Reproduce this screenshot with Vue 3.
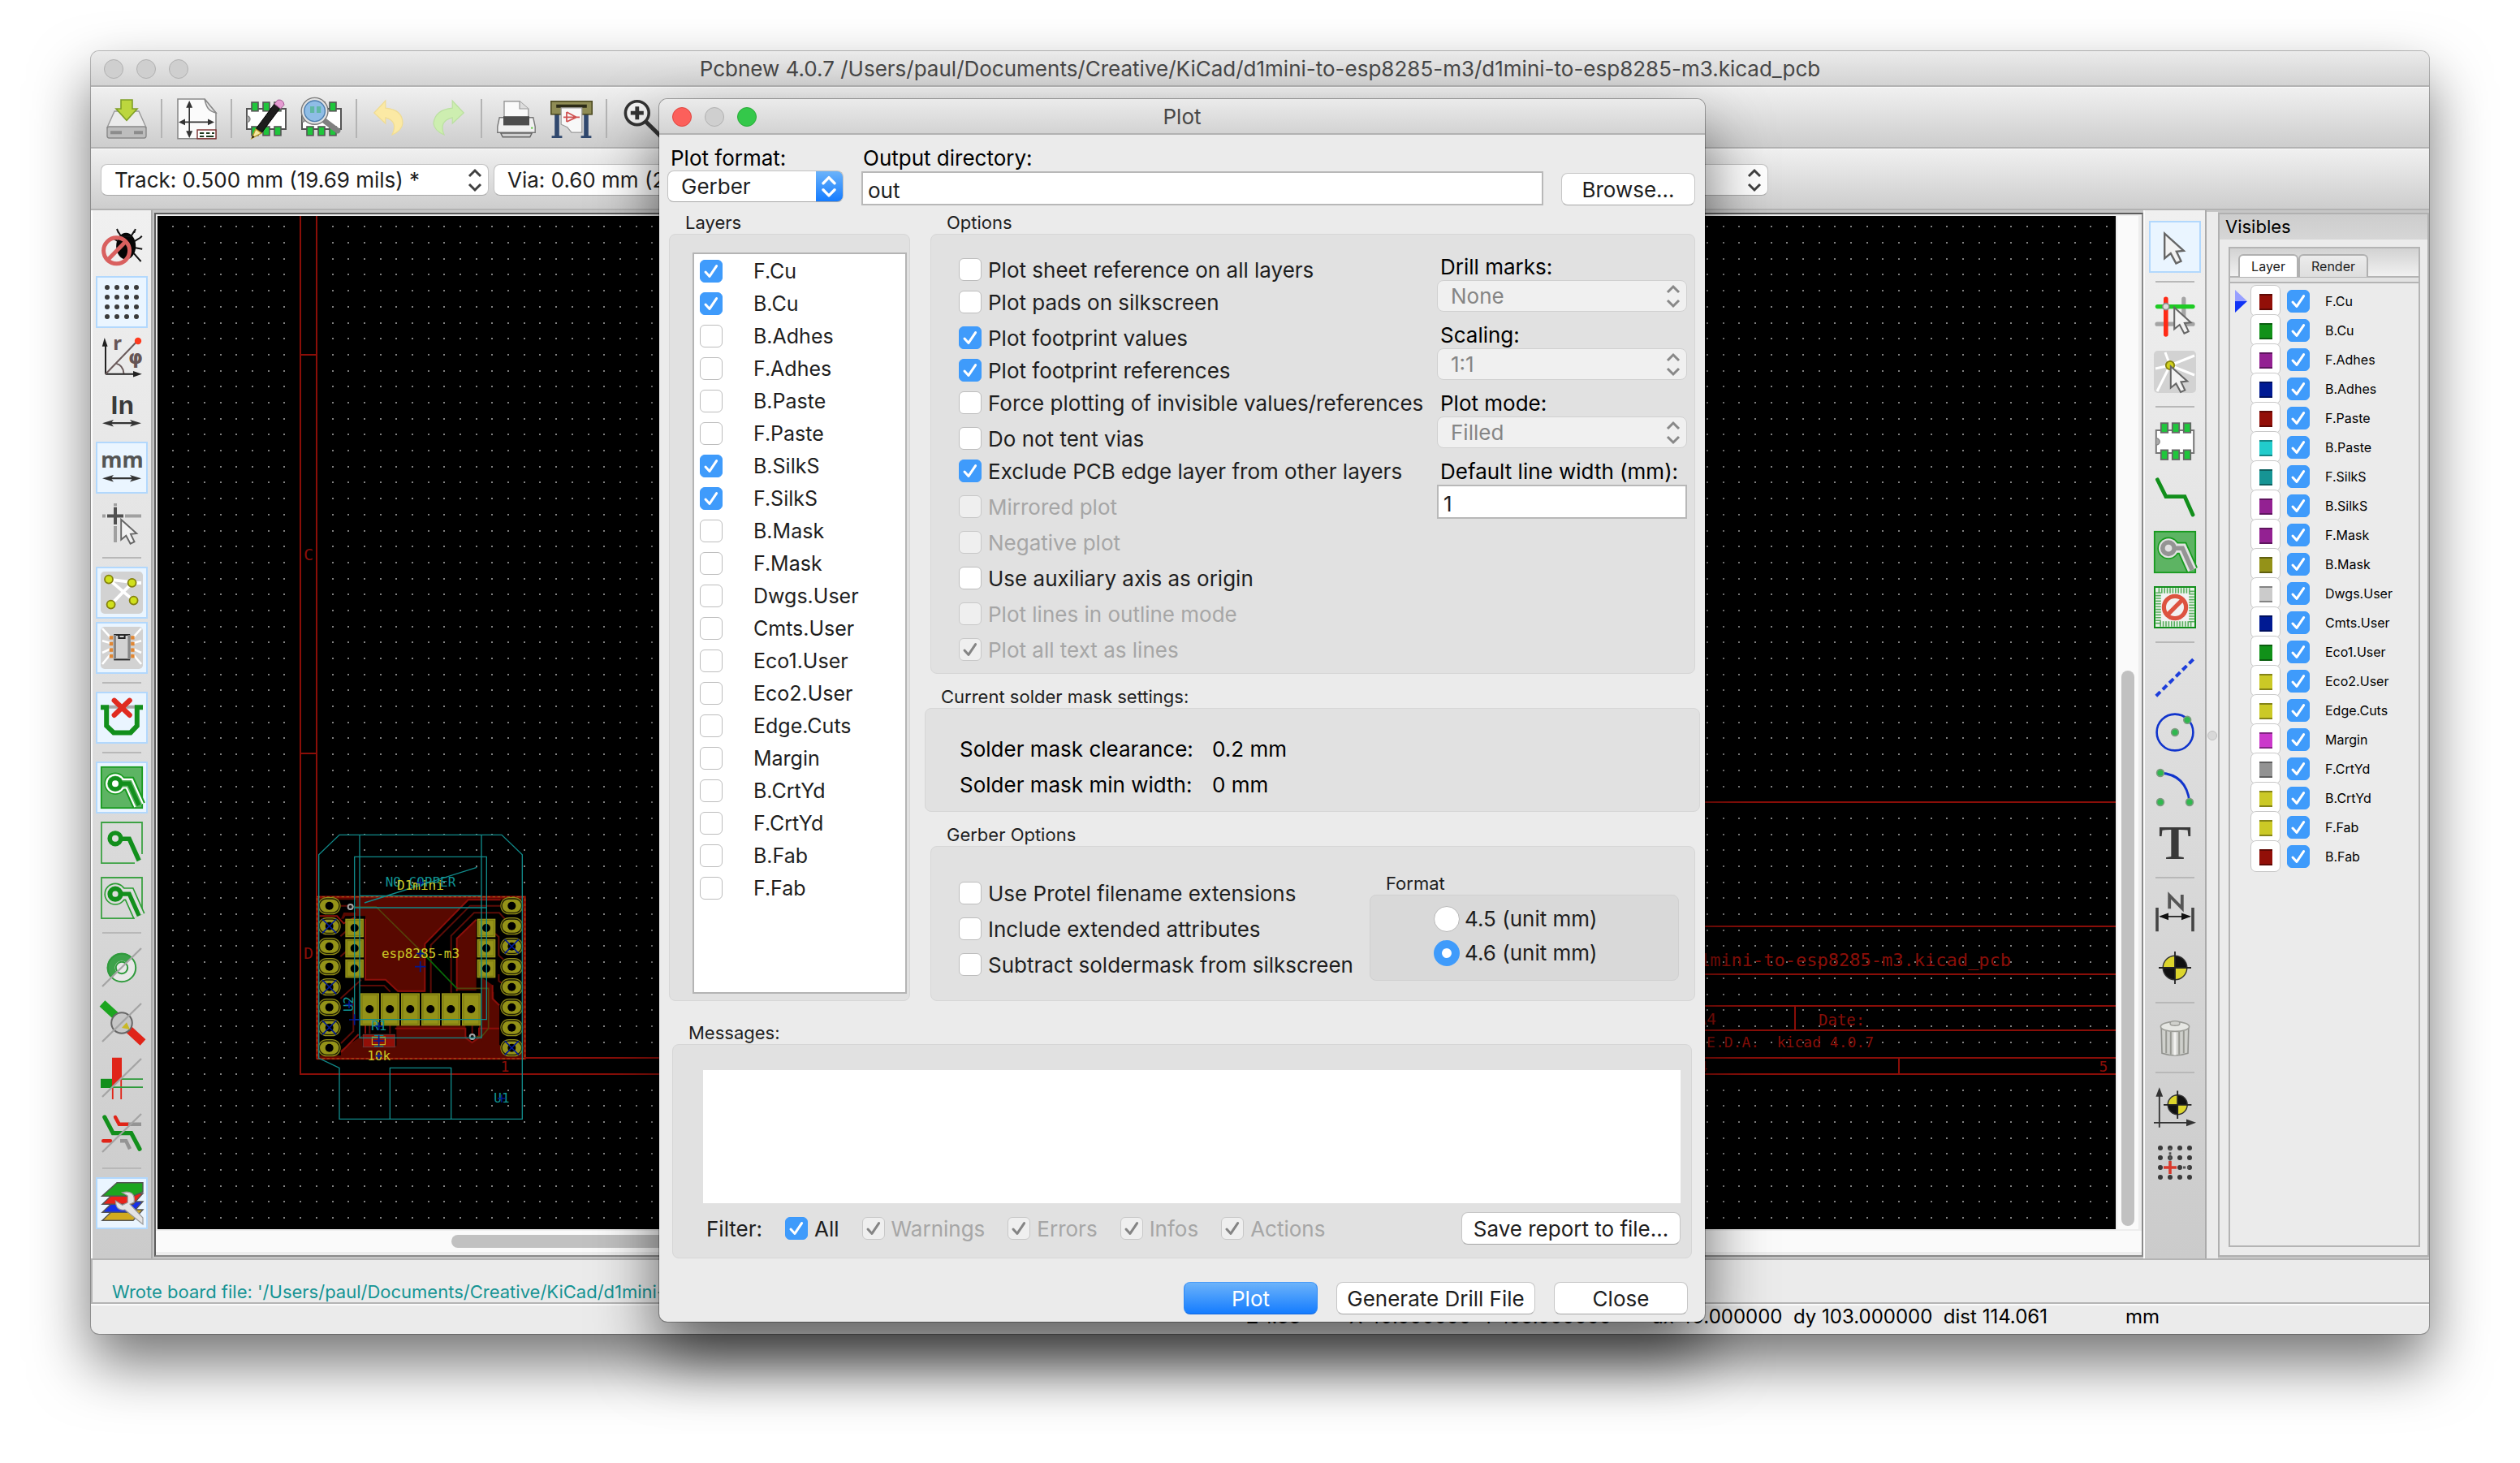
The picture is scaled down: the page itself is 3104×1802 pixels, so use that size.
<script setup>
import { ref } from 'vue'

const pointer = (x, y, s = 1) =>
  `<path transform="translate(${x} ${y}) scale(${s})" d="M0 0 L0 13 L3.2 10.4 L6 15.6 L8.6 14.4 L6.2 9.4 L10 9 Z" fill="#f2f2f2" stroke="#666" stroke-width="1"/>`

const target = (x, y, r) =>
  `<g transform="translate(${x} ${y})"><circle r="${r}" fill="#111"/><path d="M0 0V${-r}A${r} ${r} 0 0 0 ${-r} 0ZM0 0V${r}A${r} ${r} 0 0 0 ${r} 0Z" fill="#dcd52c"/><circle r="${r}" fill="none" stroke="#333" stroke-width=".7"/><path d="M${-r - 2.6} 0H${r + 2.6}M0 ${-r - 2.6}V${r + 2.6}" stroke="#222" stroke-width=".9"/></g>`

const dots = (skip = []) => {
  let out = ''
  for (const y of [4, 10, 16, 22]) {
    for (const x of [4, 10, 16, 22]) {
      if (!skip.includes(`${x},${y}`)) out += `<circle cx="${x}" cy="${y}" r="1.5" fill="#3a3a3a"/>`
    }
  }
  return out
}

const trackPath = 'M12.5 10.6H17.6L23.6 24'
const board =
  '<path d="M1 7H25V19.5H1Z" fill="#fff" stroke="#555" stroke-width="1"/><path d="M1.2 11.5a1.8 1.8 0 0 1 0 3.6" fill="#aaa" stroke="#888" stroke-width=".7"/>' +
  [4, 11, 18].map(x => `<rect x="${x}" y="3" width="4" height="5.4" fill="#1fc63c" stroke="#555" stroke-width=".8"/><rect x="${x}" y="18" width="4" height="5.4" fill="#1fc63c" stroke="#555" stroke-width=".8"/>`).join('')
const arrows = y =>
  `<path d="M4 ${y}H22" stroke="#333" stroke-width="1.1"/><path d="M1 ${y}L8 ${y - 2.1}L6.4 ${y}L8 ${y + 2.1}ZM25 ${y}L18 ${y - 2.1}L19.6 ${y}L18 ${y + 2.1}Z" fill="#333"/>`
const slash = '<path d="M1 24.5L25 1" stroke="#a4a4a4" stroke-width="1.1"/>'
const grayTile = '<rect width="26" height="26" rx="2.4" fill="#d2d2d2"/>'

const icons = {
  save: '<path d="M5.5 8.5H20.5L25 18.5H1Z" fill="#ebebeb" stroke="#999" stroke-width=".7"/><rect x="1" y="18" width="24" height="7" rx="1.2" fill="#bdbdbd" stroke="#888" stroke-width=".7"/><path d="M3 21.6H10M17.5 21.6H23" stroke="#8c8c8c" stroke-width="2"/><path d="M9.5 1.5H16.5V7H19.5L13 14.2L6.5 7H9.5Z" fill="#bcd63e" stroke="#7f9f26" stroke-width=".8"/>',
  page: '<path d="M1.5 1H18L25 9.5V25.4H1.5Z" fill="#fbfbfb" stroke="#8a8a8a" stroke-width=".8"/><path d="M18 1C19 6 20.5 8.5 25 9.5Z" fill="#e6e6e6" stroke="#8a8a8a" stroke-width=".7"/><path d="M8.6 4V23M4 15.2H22" stroke="#333" stroke-width=".8"/><path d="M8.6 2L10.6 6.4H6.6ZM8.6 25L10.6 20.6H6.6ZM2 15.2L6 13.3V17.1ZM24 15.2L20 13.3V17.1Z" fill="#333"/><rect x="13.5" y="20" width="11.5" height="5.4" fill="#fff" stroke="#7a3030" stroke-width=".7"/><path d="M15 22H17.6M19 22H21.2M22.5 22H24M15 24H17.6M19 24H23.6" stroke="#1d381d" stroke-width="1.1"/>',
  boardEdit: board + '<path d="M6.5 19.5L18 4L21.5 6.6L10 22Z" fill="#1d1d1d" stroke="#000" stroke-width=".5"/><path d="M18 4L20 1.6Q23.5 1 24 4.6L21.8 7Z" fill="#e59bd2" stroke="#a35a94" stroke-width=".5"/><path d="M6.5 19.5L4 25.2L10 22Z" fill="#f4e8a0" stroke="#bb9a28" stroke-width=".7"/><path d="M4.6 23.4L4 25.2L5.8 24.4Z" fill="#111"/>',
  boardFind: board + '<path d="M15 14.5L23 20.5" stroke="#808080" stroke-width="3.4" stroke-linecap="round"/><circle cx="8.8" cy="8.4" r="7.4" fill="#8fbde6" stroke="#e2e2e2" stroke-width="1.8"/><circle cx="8.8" cy="8.4" r="8.2" fill="none" stroke="#7a7a7a" stroke-width=".7"/><circle cx="8.8" cy="8.4" r="6.4" fill="none" stroke="#4f7faf" stroke-width=".7"/><path d="M6 5.5h2.6v4H6zM10 5.5h2.6v4H10z" fill="#5fb8a4"/>',
  undo: '<path d="M2.4 9.5L9.4 2V6.6Q20 7.5 20 16Q19.5 20.5 13.5 23Q17.5 14.5 9.4 12.4V16Z" fill="#fbe9a4" stroke="#f0dc92" stroke-width=".6"/>',
  redo: '<path d="M23.6 9.5L16.6 2V6.6Q6 7.5 5 16Q5.5 20.5 11.5 23Q8 14.5 16.6 12.4V16Z" fill="#cdeeb0" stroke="#bbe0a0" stroke-width=".6"/>',
  print: '<path d="M5.5 13V2.4H15L20.4 7V13Z" fill="#fafafa" stroke="#999" stroke-width=".7"/><path d="M15 2.4V7H20.4" fill="#ddd" stroke="#999" stroke-width=".6"/><path d="M2.6 12.4H23.4L24.6 18V21.6H1.4V18Z" fill="#f0f0f0" stroke="#777" stroke-width=".7"/><rect x="5" y="11.6" width="16" height="5.6" fill="#4d4d4d"/><path d="M3.4 22H22.6L21.4 24.4H4.6Z" fill="#cfcfcf" stroke="#666" stroke-width=".7"/><circle cx="22.6" cy="18.8" r=".6" fill="#59c83a"/>',
  plot: '<path d="M2.6 9H5.4V23.6H7.2V25H.8V23.6H2.6ZM20.6 9H23.4V23.6H25.2V25H18.8V23.6H20.6Z" fill="#30486e"/><rect x=".4" y="2.4" width="25.2" height="8" fill="#8f8c55" stroke="#4e4b22" stroke-width=".8"/><path d="M3.6 4.4H22.4V6.4H3.6Z" fill="#2b2a16"/><path d="M6.6 6.4H19.4V21.6H13L10.4 18.4L6.6 16.6Z" fill="#f8f8f8" stroke="#999" stroke-width=".6"/><path d="M10 9V15M10 9L16 12.2L10 15M8 12.2H18" fill="none" stroke="#d05252" stroke-width=".9"/>',
  zoomIn: '<circle cx="10.4" cy="9.6" r="7.2" fill="#f4f4f4" stroke="#333" stroke-width="1.8"/><path d="M6.4 9.6H14.4M10.4 5.6V13.6" stroke="#333" stroke-width="2.4"/><path d="M15.8 15L25 24" stroke="#333" stroke-width="2.6"/>',
  bug: '<ellipse cx="15.6" cy="12.6" rx="6" ry="8.2" fill="#050505"/><path d="M10.6 3.4L12.6 6.6L18.6 6.6L20.8 3.2M10 2L11 4.4M21.4 2L20.6 4.4M20.8 9.6L24.4 7.4L25.4 6.4M21.4 13.6L25.6 14.4M20.4 17L23.4 20.4L24.8 22M8 8L10.4 9.4" fill="none" stroke="#111" stroke-width="1"/><circle cx="9.8" cy="15.4" r="8" fill="none" stroke="#d9605f" stroke-width="2.5"/><path d="M4.4 21L15.4 9.8" stroke="#d9605f" stroke-width="2.5"/>',
  grid: dots(),
  polar: '<path d="M3 23.4V4M3 23.4H23" stroke="#222" stroke-width="1"/><path d="M2.4 1L4.3 6.4H.9ZM25.4 23.4L20 21.5V25.3Z" fill="#222"/><path d="M3 23.4L22.6 3M9.4 16.8Q14 18 14.2 23" fill="none" stroke="#6a5a5a" stroke-width="1"/><circle cx="23" cy="3" r="2.1" fill="#ff3a1e"/><text x="7.6" y="8.6" font-family="Noto Sans" font-weight="700" font-size="12" fill="#655">r</text><text x="17" y="17" font-family="DejaVu Sans" font-weight="700" font-size="11.5" fill="#655">φ</text>',
  inch: '<text x="13.4" y="13.8" text-anchor="middle" font-family="Liberation Sans" font-weight="700" font-size="16" fill="#3a3a3a">In</text>' + arrows(19.6),
  mm: '<text x="13.2" y="12.8" text-anchor="middle" font-family="Noto Sans" font-weight="700" font-size="13.4" fill="#555">mm</text>' + arrows(19.6),
  crosshair: '<path d="M1 8.8H3M15 8.8H25M9 1V2.6M9 15V25" stroke="#a0a0a0" stroke-width="2"/><path d="M4 8.8H14M9 3.4V14" stroke="#505050" stroke-width="2"/>' + pointer(12.6, 11, 0.95),
  ratsnest: grayTile + '<path d="M5 4.8L19.3 6.6M5 4.8L20.3 17.8M19.3 7L6.3 20.3M19 7H25" stroke="#fff" stroke-width="1.9"/>' + [[5, 4.8], [19.3, 6.9], [6.3, 20.3], [20.3, 17.8]].map(([x, y]) => `<circle cx="${x}" cy="${y}" r="2.5" fill="#d0e01c" stroke="#83800e" stroke-width=".9"/>`).join(''),
  chip: grayTile + '<path d="M6 6.6L1 1M6 10L1 8.6M6 13.6L1 16M6 17L1 23M20 6.6L25 1M20 10L25 8.6M20 13.6L25 16M20 17L25 23" stroke="#fff" stroke-width="1.3"/><rect x="8.6" y="5" width="9" height="15.2" fill="#d2d2d2" stroke="#2b2b2b" stroke-width="1"/><path d="M8.7 5V20M17.5 5V20" stroke="#888" stroke-width="1.6"/><path d="M11.2 5.2V7H14.8V5.2" fill="none" stroke="#222" stroke-width="1"/>' + [6.6, 10.4, 14.2, 18].map(y => `<rect x="5.4" y="${y - 1}" width="2.2" height="2.2" fill="#e08734"/><rect x="18.6" y="${y - 1}" width="2.2" height="2.2" fill="#e08734"/>`).join(''),
  drc: '<path d="M4 6.4H22" stroke="#aaa" stroke-width="2"/><path d="M0 6.6H3.6V18L8 22.2H18.4L22.4 18V6.6H26" fill="none" stroke="#128f1c" stroke-width="3"/><path d="M8.4 2.4L17.8 11.4M17.8 2.4L8.4 11.4" stroke="#e02b20" stroke-width="3.2" stroke-linecap="round"/>',
  zoneFill: `<rect x=".4" y=".4" width="25.2" height="25.2" fill="#5db463" stroke="#179a1e" stroke-width=".9"/><circle cx="9" cy="10.6" r="6.8" fill="#179a1e"/><path d="${trackPath}" fill="none" stroke="#179a1e" stroke-width="8.4"/><circle cx="9" cy="10.6" r="6" fill="#fff"/><path d="${trackPath}" fill="none" stroke="#fff" stroke-width="6.4"/><circle cx="9" cy="10.6" r="4.9" fill="#5db463"/><path d="${trackPath}" fill="none" stroke="#5db463" stroke-width="4.2"/><circle cx="9" cy="10.6" r="3.3" fill="#fff" stroke="#128f1c" stroke-width="2.6"/><path d="${trackPath}" fill="none" stroke="#128f1c" stroke-width="2.6"/>`,
  zoneNone: `<path d="M21 25.6H.5V.5H25.5V20" fill="none" stroke="#3da244" stroke-width=".9"/><circle cx="9" cy="10.4" r="3.4" fill="#ddd" stroke="#128f1c" stroke-width="2.8"/><path d="${trackPath}" fill="none" stroke="#128f1c" stroke-width="2.8"/>`,
  zoneOutline: `<path d="M21 25.6H.5V.5H25.5V20" fill="none" stroke="#3da244" stroke-width=".9"/><circle cx="9" cy="10.6" r="6.8" fill="#2a9c32"/><path d="${trackPath}" fill="none" stroke="#2a9c32" stroke-width="8"/><circle cx="9" cy="10.6" r="6" fill="#ddd"/><path d="${trackPath}" fill="none" stroke="#ddd" stroke-width="6.4"/><circle cx="9" cy="10.6" r="3.3" fill="#ddd" stroke="#128f1c" stroke-width="3"/><path d="${trackPath}" fill="none" stroke="#128f1c" stroke-width="2.6"/>`,
  via: '<circle cx="13" cy="13" r="6.4" fill="none" stroke="#e8e8e8" stroke-width="5"/><path d="M6.4 19.4A9 9 0 0 1 19.4 6.6L16 10A4 4 0 0 0 10 16Z" fill="#3da24a"/><circle cx="13" cy="13" r="8.6" fill="none" stroke="#2f9a3c" stroke-width="1"/><circle cx="13" cy="13" r="3.6" fill="#e8e8e8" stroke="#2f9a3c" stroke-width="1"/>' + slash,
  contrast: '<path d="M1 1L13 12" stroke="#1ba51f" stroke-width="5"/><path d="M13 13L26 25" stroke="#e02418" stroke-width="5"/><circle cx="13" cy="13" r="6.4" fill="#c6c6c6" stroke="#666" stroke-width="1"/><path d="M13 16L16 12.6L18 17Z" fill="#c9b824"/>' + slash,
  trackMode: '<rect y="13.4" width="7" height="5.6" fill="#128f1c"/><path d="M7 .4H13V13.5L7 18Z" fill="#e02418"/><path d="M7.4 17V26M12.6 13V26" stroke="#e02418" stroke-width=".9"/><path d="M13 13.6H26M7 18.6H26" stroke="#2f9a3c" stroke-width=".9"/>' + slash,
  trackSketch: '<path d="M9 3L11.4 7.4H17" fill="none" stroke="#e02418" stroke-width="2.2" stroke-linecap="round"/><path d="M17 7.4H25M12 17.6H15.6L18 22.6" fill="none" stroke="#949494" stroke-width="2.2"/><path d="M2.4 3L7.6 12.8H18.8L24 22.6" fill="none" stroke="#128f1c" stroke-width="2.6" stroke-linecap="round"/><path d="M1.6 17.6H6" stroke="#e02418" stroke-width="2.2" stroke-linecap="round"/>' + slash,
  layers: '<path d="M8 17L1 23.6H20L26 17Z" fill="#d2ab1f" stroke="#555" stroke-width=".7"/><path d="M8 12L1 18.6H20L26 12Z" fill="#1630e8" stroke="#555" stroke-width=".7"/><path d="M8 7L1 13.6H20L26 7Z" fill="#e8231a" stroke="#555" stroke-width=".7"/><path d="M10 .4L.8 8.6H20L26 6V.4Z" fill="#1ba51f" stroke="#555" stroke-width=".7"/><path d="M18 13.6L26 22V26L14.8 17Q9.4 18 9.2 11.6L13.4 14.2L16.6 12.6V8.4L13.2 6.4Q21.6 4.6 20.6 12.4Z" fill="#e4e4e4" stroke="#9a9a9a" stroke-width=".6"/>',
  arrow: pointer(6.6, 4.8, 1.18),
  highlight: '<path d="M18.4 2V16M2 17.6H24" stroke="#a4a4a4" stroke-width="2.6" stroke-linecap="round"/><path d="M7.4 2.2V24" stroke="#ff2a16" stroke-width="2.8" stroke-linecap="round"/><path d="M2.2 6.8H24" stroke="#1ecb24" stroke-width="2.6" stroke-linecap="round"/><circle cx="7.4" cy="6.8" r="2" fill="#ddd" stroke="#888" stroke-width=".8"/>' + pointer(12.6, 7.4, 1.02),
  localRats: grayTile + '<path d="M10 9L7 1M10 9L25 3M10 9L1 11M10 9L25 15M10 9L2 25" stroke="#fff" stroke-width="1.5"/><circle cx="10" cy="9" r="2.6" fill="#d0d01c" stroke="#83800e" stroke-width=".9"/>' + pointer(10.4, 9.6, 1.02),
  footprint: '<path d="M1.4 6H24.6V20H1.4Z" fill="#fff" stroke="#777" stroke-width="1"/><path d="M1.6 11a2 2 0 0 1 0 4" fill="#aaa" stroke="#888" stroke-width=".7"/>' + [4.4, 11.4, 18.4].map(x => `<rect x="${x}" y="1.6" width="4.2" height="5.8" fill="#1fc63c" stroke="#666" stroke-width=".9"/><rect x="${x}" y="18.2" width="4.2" height="5.8" fill="#1fc63c" stroke="#666" stroke-width=".9"/>`).join(''),
  track: '<path d="M2.2 2.4L7.4 12.8H19L24 24" fill="none" stroke="#128f1c" stroke-width="2.4" stroke-linecap="round"/>',
  zone: `<rect x=".4" y=".4" width="25.2" height="25.2" fill="#5db463" stroke="#179a1e" stroke-width=".9"/><circle cx="9" cy="10.6" r="6.8" fill="#179a1e"/><path d="${trackPath}" fill="none" stroke="#179a1e" stroke-width="7.4"/><circle cx="9" cy="10.6" r="6" fill="#e2e2e2"/><path d="${trackPath}" fill="none" stroke="#e2e2e2" stroke-width="5.6"/><circle cx="9" cy="10.6" r="3.6" fill="#e2e2e2" stroke="#949494" stroke-width="2.8"/><path d="${trackPath}" fill="none" stroke="#949494" stroke-width="2.8"/>`,
  keepout: '<rect x=".5" y=".5" width="25" height="25" fill="#e8f2e8" stroke="#128f1c" stroke-width="1"/><rect x="2.8" y="2.8" width="20.4" height="20.4" fill="none" stroke="#59ad5f" stroke-width="3.4" stroke-dasharray=".8 .9"/><rect x="4.4" y="4.4" width="17.2" height="17.2" fill="#f2f2f2"/><circle cx="13" cy="13" r="6.8" fill="none" stroke="#dd5340" stroke-width="2.6"/><path d="M8.6 17.4L17.4 8.6" stroke="#dd5340" stroke-width="2.6"/>',
  line: '<path d="M1.4 24.6L25 1.4" stroke="#1c3ddb" stroke-width="2" stroke-dasharray="3.6 2.1"/>',
  circle: '<circle cx="13" cy="13" r="11.2" fill="none" stroke="#1034cc" stroke-width="1.3"/><circle cx="13" cy="13" r="2.2" fill="#2fb84e" stroke="#7d9a80" stroke-width=".8"/><circle cx="20.6" cy="5.4" r="2.2" fill="#2fb84e" stroke="#7d9a80" stroke-width=".8"/>',
  arc: '<path d="M4 4Q20 5 22 22" fill="none" stroke="#1034cc" stroke-width="1.4"/>' + [[4, 4], [4, 22], [22, 22]].map(([x, y]) => `<circle cx="${x}" cy="${y}" r="2.2" fill="#2fb84e" stroke="#7d9a80" stroke-width=".8"/>`).join(''),
  text: '<text x="13" y="23" text-anchor="middle" font-family="Liberation Serif" font-weight="700" font-size="30" fill="#3a3a3a">T</text>',
  dimension: '<path d="M2 10V24.6M24 10V24.6" stroke="#444" stroke-width="1.8"/><path d="M4 15.4H22" stroke="#222" stroke-width=".9"/><path d="M3 15.4L9 13.2V17.6ZM23 15.4L17 13.2V17.6Z" fill="#111"/><path d="M9.6 10.6V2.4L17.4 10.4V2" fill="none" stroke="#555" stroke-width="1.9"/>',
  target: target(13, 13, 7.4),
  trash: '<path d="M4.6 7H21.4L21 22.6Q13 25.4 5 22.6Z" fill="#cfd0cc" stroke="#8f908c" stroke-width=".8"/><path d="M7.6 9V22.6M10.4 9.4V23.4M15.6 9.4V23.4M18.4 9V22.6" stroke="#989993" stroke-width="1"/><path d="M13 9.4V23.8" stroke="#f2f2f0" stroke-width="1.6"/><ellipse cx="13" cy="6.2" rx="8.8" ry="3" fill="#e6e7e3" stroke="#9b9c97" stroke-width=".8"/><ellipse cx="13" cy="4.2" rx="3" ry="1.4" fill="#d0d1cc" stroke="#9b9c97" stroke-width=".7"/>',
  origin: '<path d="M3.4 25.4V4M0 22.4H22" stroke="#333" stroke-width=".9"/><path d="M3.4 .6L5.6 6.4H1.2ZM26 22.4L20 20.2V24.6Z" fill="#333"/>' + target(14.6, 11.4, 6),
  gridOrigin: dots(['10,16']) + '<path d="M10 4V12M18 16H22" stroke="#555" stroke-width="1.4" stroke-dasharray="1.6 1"/><path d="M6 16H14M10 12V20" stroke="#d8392c" stroke-width="1.8"/>',
}

const topTools = ['save', '|', 'page', '|', 'boardEdit', 'boardFind', '|', 'undo', 'redo', '|', 'print', 'plot', '|', 'zoomIn']
const leftTools = ['bug', '*grid', 'polar', 'inch', '*mm', 'crosshair', '|', '*ratsnest', '*chip', '|', '*drc', '|', '*zoneFill', 'zoneNone', 'zoneOutline', '|', 'via', 'contrast', 'trackMode', 'trackSketch', '|', '*layers']
const rightTools = ['*arrow', '|', 'highlight', 'localRats', '|', 'footprint', 'track', 'zone', 'keepout', '|', 'line', 'circle', 'arc', 'text', '|', 'dimension', 'target', '|', 'trash', '|', 'origin', 'gridOrigin']
const parse = list => list.map(t => ({ sep: t === '|', on: t[0] === '*', name: t.replace('*', '') }))
const columns = { left: parse(leftTools), right: parse(rightTools) }

const visibles = ref([
  ['F.Cu', '#920f08'], ['B.Cu', '#119119'], ['F.Adhes', '#932192'], ['B.Adhes', '#001a93'],
  ['F.Paste', '#920f08'], ['B.Paste', '#21cccc'], ['F.SilkS', '#169494'], ['B.SilkS', '#932192'],
  ['F.Mask', '#932192'], ['B.Mask', '#949218'], ['Dwgs.User', '#cbcbcb'], ['Cmts.User', '#001a93'],
  ['Eco1.User', '#119119'], ['Eco2.User', '#cbc926'], ['Edge.Cuts', '#cbc926'], ['Margin', '#cb38cb'],
  ['F.CrtYd', '#929292'], ['B.CrtYd', '#cbc926'], ['F.Fab', '#cbc926'], ['B.Fab', '#920f08'],
].map(([name, color]) => ({ name, color, on: true })))

const plotLayers = ref([
  'F.Cu', 'B.Cu', 'B.Adhes', 'F.Adhes', 'B.Paste', 'F.Paste', 'B.SilkS', 'F.SilkS', 'B.Mask', 'F.Mask',
  'Dwgs.User', 'Cmts.User', 'Eco1.User', 'Eco2.User', 'Edge.Cuts', 'Margin', 'B.CrtYd', 'F.CrtYd', 'B.Fab', 'F.Fab',
].map(name => ({ name, on: ['F.Cu', 'B.Cu', 'B.SilkS', 'F.SilkS'].includes(name) })))

const options = ref([
  { label: 'Plot sheet reference on all layers', on: false },
  { label: 'Plot pads on silkscreen', on: false, tall: true },
  { label: 'Plot footprint values', on: true },
  { label: 'Plot footprint references', on: true },
  { label: 'Force plotting of invisible values/references', on: false, tall: true },
  { label: 'Do not tent vias', on: false },
  { label: 'Exclude PCB edge layer from other layers', on: true, tall: true },
  { label: 'Mirrored plot', on: false, off: true, tall: true },
  { label: 'Negative plot', on: false, off: true, tall: true },
  { label: 'Use auxiliary axis as origin', on: false, tall: true },
  { label: 'Plot lines in outline mode', on: false, off: true, tall: true },
  { label: 'Plot all text as lines', on: true, off: true, tall: true },
])

const gerberOptions = ref([
  { label: 'Use Protel filename extensions', on: false },
  { label: 'Include extended attributes', on: false },
  { label: 'Subtract soldermask from silkscreen', on: false },
])

const filters = ref([
  { label: 'All', on: true },
  { label: 'Warnings', on: true, off: true },
  { label: 'Errors', on: true, off: true },
  { label: 'Infos', on: true, off: true },
  { label: 'Actions', on: true, off: true },
])

const outDir = ref('out')
const lineWidth = ref('1')
const gerberFormat = ref('4.6')

// Work-grid dots, snapped to whole units so that each one stays crisp
const pitch = 19.69
let gridPath = ''
for (let i = 0; i < 123; i++) {
  for (let j = 0; j < 63; j++) {
    gridPath += `M${Math.round(211.6 + i * pitch)} ${Math.round(278.4 + j * pitch)}h2v2h-2z`
  }
}

const ovalPads = []
const leftNc = [1, 4, 6]
const rightNc = [2, 7]
for (let i = 0; i < 8; i++) {
  ovalPads.push({ x: 137, y: 347 + i * 75, nc: leftNc.includes(i) })
  ovalPads.push({ x: 811, y: 347 + i * 75, nc: rightNc.includes(i) })
}
const squarePads = [429, 504, 579].flatMap(y => [{ x: 230, y }, { x: 717, y }])
const bottomPads = [286, 361, 436, 511, 586, 661]
const anchors = [[473, 262, 14], [473, 524, 14], [473, 572, 20], [210, 712, 14], [230, 768, 20], [320, 792, 14], [320, 846, 20], [320, 902, 12], [773, 1059, 14]]
</script>

<template>
  <div class="desktop">
    <main class="window">
      <header class="titlebar">
        <div class="lights"><i></i><i></i><i></i></div>
        <h1>Pcbnew 4.0.7 /Users/paul/Documents/Creative/KiCad/d1mini-to-esp8285-m3/d1mini-to-esp8285-m3.kicad_pcb</h1>
      </header>

      <nav class="toolbar" aria-label="Main toolbar">
        <template v-for="(t, i) in topTools" :key="i">
          <span v-if="t === '|'" class="vsep"></span>
          <button v-else class="tool-h" :aria-label="t"><svg class="icon" viewBox="0 0 26 26" v-html="icons[t]"></svg></button>
        </template>
      </nav>

      <div class="toolbar selectors">
        <select class="select track" aria-label="Track width"><option>Track: 0.500 mm (19.69 mils) *</option></select>
        <select class="select" aria-label="Via size"><option>Via: 0.60 mm (23.6 mils)/ 0.40 mm (15.7 mils) *</option></select>
        <select class="select" aria-label="Grid"><option>Grid: 2.5400 mm (100.00 mils)</option></select>
        <select class="select" aria-label="Zoom"><option>Zoom 1.33</option></select>
      </div>

      <div class="workspace">
        <aside class="tools left">
          <template v-for="(t, i) in columns.left" :key="i">
            <span v-if="t.sep" class="hsep"></span>
            <button v-else class="tool" :class="{ on: t.on }" :aria-label="t.name"><svg class="icon" viewBox="0 0 26 26" v-html="icons[t.name]"></svg></button>
          </template>
        </aside>

        <section class="canvas-pane">
          <div class="canvas-row">
            <svg class="canvas" viewBox="194 266 2412 1248">
              <rect x="194" y="266" width="2412" height="1248" fill="#000" />
              <path :d="gridPath" fill="#808080" />

              <g class="sheet">
                <path d="M370 266V1323H2606M390 266V1303H2606" />
                <path d="M370 437H390M370 928H390M870 1303V1323M2339 1303V1323" />
                <path d="M1900 988H2606M1900 1141H2606M1900 1200H2606M1900 1239H2606M1900 1269H2606M2211 1239V1269" />
              </g>
              <g class="sheet-text">
                <text x="380" y="690" text-anchor="middle" font-size="20">C</text>
                <text x="380" y="1181" text-anchor="middle" font-size="20">D</text>
                <text x="622" y="1320" text-anchor="middle" font-size="18">1</text>
                <text x="2098" y="1320" text-anchor="middle" font-size="18">4</text>
                <text x="2591" y="1320" text-anchor="middle" font-size="18">5</text>
                <text x="2477" y="1190" text-anchor="end" font-size="22">File: d1mini-to-esp8285-m3.kicad_pcb</text>
                <text x="2114" y="1262" text-anchor="end" font-size="20">Size: A4</text>
                <text x="2240" y="1263" font-size="19">Date:</text>
                <text x="2308" y="1290" text-anchor="end" font-size="18">KiCad E.D.A.&nbsp;&nbsp;kicad 4.0.7</text>
              </g>

              <g transform="translate(360 1000) scale(.33333)">
                <rect x="91" y="313" width="770" height="600" fill="#580800" />
                <path d="M100 325H235V372H190L180 395H100ZM100 395H190L196 385H270V620H345L392 665H700V790H640V825L664 850L690 825V790H385V865H260V825L180 880V900H100ZM490 490L650 325H850V880H790L765 860V740L745 690V640L700 610V665H608V468L685 398V385H765V665H490Z" fill="#000" />
                <path d="M608 468L680 398V660H608ZM700 612L740 640V690L765 715V850L700 850Z" fill="#580800" />
                <path d="M270 395V620H345L390 662H490V488L650 325H770M608 662V468L680 398M245 822L180 888M740 640V690L765 715M100 385H165L190 412L235 388M270 790V820M380 800H640V835L664 852L690 835V800H765" fill="none" stroke="#8a0f0a" stroke-width="6" />
                <path d="M178 347H215M178 460L200 440M178 535L200 515M178 690L255 620M250 642H340L362 665M226 690V810L180 855M512 668V492L657 347H770M587 668V458L672 373H765L790 400M750 450L763 462V530L780 545M763 600V625L785 640M286 790V820M361 790V820M665 790V820" fill="none" stroke="#5c0c07" stroke-width="6" />
                <path d="M215 351H310L473 512M608 652H725V800L700 830H680" fill="none" stroke="#54420a" stroke-width="5" />
                <path d="M473 512L608 652" stroke="#086a08" stroke-width="5" />
                <rect x="92" y="314" width="768" height="598" fill="none" stroke="#930f08" stroke-width="7" />
                <rect x="92" y="314" width="768" height="598" fill="none" stroke="#a5621a" stroke-width="3" stroke-dasharray="10 8" />

                <g v-for="(p, i) in ovalPads" :key="'o' + i">
                  <rect :x="p.x - 42" :y="p.y - 32" width="84" height="64" rx="32" fill="#8f8c18" />
                  <rect :x="p.x - 37" :y="p.y - 26" width="74" height="52" rx="26" fill="#949218" stroke="#1c1b04" stroke-width="4" />
                  <circle :cx="p.x" :cy="p.y" r="15" fill="#000" />
                  <path v-if="p.nc" :d="`M${p.x - 26} ${p.y - 26}l52 52m0 -52l-52 52`" stroke="#001a93" stroke-width="5" />
                </g>
                <g v-for="(p, i) in squarePads" :key="'s' + i">
                  <rect :x="p.x - 34" :y="p.y - 34" width="68" height="68" fill="#949218" />
                  <rect :x="p.x - 28" :y="p.y - 28" width="56" height="56" fill="none" stroke="#78760f" stroke-width="3" />
                  <circle :cx="p.x" :cy="p.y" r="15" fill="#000" />
                </g>
                <g v-for="x in bottomPads" :key="x">
                  <rect :x="x - 34" y="670" width="69" height="120" fill="#949218" />
                  <rect :x="x - 28" y="676" width="57" height="108" fill="none" stroke="#78760f" stroke-width="3" />
                  <circle :cx="x" cy="729" r="15" fill="#000" />
                </g>
                <g fill="#111" stroke="#a8a8a8" stroke-width="6">
                  <circle cx="215" cy="351" r="9" />
                  <circle cx="665" cy="831" r="9" />
                </g>
                <rect x="262" y="823" width="117" height="46" fill="#920f08" stroke="#6a3a38" stroke-width="3" />
                <rect x="295" y="832" width="48" height="28" fill="none" stroke="#cbc926" stroke-width="3" />

                <g fill="none" stroke="#118a8a" stroke-width="4">
                  <path d="M174 85H774L850 158V1135H174V946L98 910V158ZM361 1135V946H587V1135" />
                  <path d="M249 85V835H699V85M249 310H699M230 166H718V767H230ZM230 354H718M267 336L682 205" />
                  <path d="M303 826H337M303 866H337" />
                </g>
                <g class="board-text">
                  <text x="474" y="276" fill="#119595">NO COPPER</text>
                  <text x="474" y="288" fill="#cbc926">D1mini</text>
                  <text x="474" y="540" fill="#cbc926">esp8285-m3</text>
                  <text x="320" y="917" fill="#cbc926">10k</text>
                  <text x="320" y="806" fill="#119595">R1</text>
                  <text x="774" y="1074" fill="#119595">U1</text>
                  <text transform="translate(226 710) rotate(-90)" fill="#119595">U2</text>
                </g>
                <path v-for="([x, y, r], i) in anchors" :key="'a' + i" :d="`M${x - r} ${y}h${2 * r}M${x} ${y - r}v${2 * r}`" stroke="#001a93" stroke-width="5" />
              </g>
            </svg>
            <div class="vscroll"><span></span></div>
          </div>
          <div class="hscroll"><span></span></div>
        </section>

        <aside class="tools right">
          <template v-for="(t, i) in columns.right" :key="i">
            <span v-if="t.sep" class="hsep"></span>
            <button v-else class="tool" :class="{ on: t.on }" :aria-label="t.name"><svg class="icon" viewBox="0 0 26 26" v-html="icons[t.name]"></svg></button>
          </template>
        </aside>

        <div class="sash"><i></i></div>

        <aside class="visibles">
          <h2>Visibles</h2>
          <div class="notebook">
            <div class="tabs">
              <button class="tab active">Layer</button>
              <button class="tab">Render</button>
            </div>
            <ul class="layer-rows">
              <li v-for="(l, i) in visibles" :key="l.name">
                <span class="marker" :class="{ shown: i === 0 }"></span>
                <button class="swatch" :aria-label="l.name + ' colour'"><i :style="{ background: l.color }"></i></button>
                <label><input v-model="l.on" type="checkbox" class="check" />{{ l.name }}</label>
              </li>
            </ul>
          </div>
        </aside>
      </div>

      <div class="message-bar">Wrote board file: '/Users/paul/Documents/Creative/KiCad/d1mini-to-esp8285-m3/d1mini-to-esp8285-m3.kicad_pcb'</div>
      <footer class="status-bar">
        <span class="s-zoom">Z 1.33</span>
        <span class="s-pos">X 49.000000&nbsp; Y 103.000000</span>
        <span class="s-delta">dx 49.000000&nbsp; dy 103.000000&nbsp; dist 114.061</span>
        <span class="s-unit">mm</span>
      </footer>
    </main>

    <div class="dialog" role="dialog" aria-label="Plot">
      <header class="titlebar">
        <div class="lights active"><i></i><i></i><i></i></div>
        <h1>Plot</h1>
      </header>
      <div class="body">
        <div class="top-row">
          <div class="field format">
            <label for="fmt">Plot format:</label>
            <select id="fmt" class="select accent"><option>Gerber</option></select>
          </div>
          <div class="field outdir">
            <label for="out">Output directory:</label>
            <input id="out" v-model="outDir" type="text" class="text" />
          </div>
          <button class="btn browse">Browse...</button>
        </div>

        <div class="columns">
          <section class="group layers">
            <h2>Layers</h2>
            <div class="panel">
              <div class="listbox">
                <label v-for="l in plotLayers" :key="l.name"><input v-model="l.on" type="checkbox" class="check" />{{ l.name }}</label>
              </div>
            </div>
          </section>

          <div class="right-col">
            <section class="group">
              <h2>Options</h2>
              <div class="panel options">
                <div class="checks">
                  <label v-for="o in options" :key="o.label" class="row" :class="{ tall: o.tall, disabled: o.off }"><input v-model="o.on" type="checkbox" class="check" :disabled="o.off" />{{ o.label }}</label>
                </div>
                <div class="fields">
                  <div class="field">
                    <label for="drill">Drill marks:</label>
                    <select id="drill" class="select" disabled><option>None</option></select>
                  </div>
                  <div class="field">
                    <label for="scaling">Scaling:</label>
                    <select id="scaling" class="select" disabled><option>1:1</option></select>
                  </div>
                  <div class="field">
                    <label for="mode">Plot mode:</label>
                    <select id="mode" class="select" disabled><option>Filled</option></select>
                  </div>
                  <div class="field">
                    <label for="lw">Default line width (mm):</label>
                    <input id="lw" v-model="lineWidth" type="text" class="text" />
                  </div>
                </div>
              </div>
            </section>

            <section class="group solder">
              <h2>Current solder mask settings:</h2>
              <dl class="panel">
                <dt>Solder mask clearance:</dt><dd>0.2 mm</dd>
                <dt>Solder mask min width:</dt><dd>0 mm</dd>
              </dl>
            </section>

            <section class="group gerber">
              <h2>Gerber Options</h2>
              <div class="panel">
                <div class="checks">
                  <label v-for="o in gerberOptions" :key="o.label" class="row tall"><input v-model="o.on" type="checkbox" class="check" />{{ o.label }}</label>
                </div>
                <section class="group fmt">
                  <h2>Format</h2>
                  <div class="panel">
                    <label><input v-model="gerberFormat" type="radio" name="gf" value="4.5" class="radio" />4.5 (unit mm)</label>
                    <label><input v-model="gerberFormat" type="radio" name="gf" value="4.6" class="radio" />4.6 (unit mm)</label>
                  </div>
                </section>
              </div>
            </section>
          </div>
        </div>

        <section class="group messages">
          <h2>Messages:</h2>
          <div class="panel">
            <textarea aria-label="Messages" readonly></textarea>
            <div class="filter-row">
              <span>Filter:</span>
              <label v-for="f in filters" :key="f.label" :class="{ disabled: f.off }"><input v-model="f.on" type="checkbox" class="check" :disabled="f.off" />{{ f.label }}</label>
              <button class="btn">Save report to file...</button>
            </div>
          </div>
        </section>

        <div class="actions">
          <button class="btn primary">Plot</button>
          <button class="btn wide">Generate Drill File</button>
          <button class="btn">Close</button>
        </div>
      </div>
    </div>
  </div>
</template>

<style>
body {
  margin: 0;
  background: #fff;
}
</style>

<style scoped>
* {
  box-sizing: border-box;
}
.desktop {
  position: relative;
  padding: 63px 112px 159px;
  overflow: hidden;
  font-family: Inter, "Liberation Sans", sans-serif;
  font-size: 26px;
  color: #1e1e1e;
}
h1, h2, ul, dl, dd {
  margin: 0;
  padding: 0;
  font-weight: 400;
}
button, select, input, textarea {
  font: inherit;
  color: inherit;
  margin: 0;
  padding: 0;
  border: 0;
}
.window {
  border-radius: 10px;
  background: #ebebeb;
  box-shadow: 0 0 0 1px rgba(0, 0, 0, .25), 0 36px 72px rgba(0, 0, 0, .55);
}
.titlebar {
  display: grid;
  grid-template-columns: 160px 1fr 160px;
  align-items: center;
  height: 44px;
  padding-top: 2px;
  border-bottom: 2px solid #b2b2b2;
  border-radius: 10px 10px 0 0;
  background: linear-gradient(#ebebeb, #d3d3d3);
}
.titlebar h1 {
  font-size: 26px;
  line-height: 40px;
  text-align: center;
  white-space: nowrap;
  color: #474747;
}
.lights {
  display: flex;
  gap: 16px;
  padding-left: 16px;
}
.lights i {
  width: 24px;
  height: 24px;
  border: 1px solid #b0b0b0;
  border-radius: 50%;
  background: #cfcfcf;
}
.lights.active i:first-child {
  border-color: #e0443e;
  background: #fc605b;
}
.lights.active i:last-child {
  border-color: #27aa35;
  background: #34c84a;
}

.toolbar {
  display: flex;
  align-items: center;
  height: 76px;
  padding: 2px 10px 0;
  border-top: 1px solid #fafafa;
  border-bottom: 2px solid #b2b2b2;
  background: linear-gradient(#f0f0f0, #cdcdcd);
}
.icon {
  display: block;
  width: 52px;
  height: 52px;
  overflow: visible;
}
.tool-h {
  padding: 0 8px;
  background: none;
}
.vsep {
  width: 2px;
  height: 48px;
  margin: 0 8px;
  background: #b4b4b4;
}
.selectors {
  gap: 6px;
  padding: 2px 814px 0 12px;
}
.selectors .select {
  flex: 1;
}
.selectors .track {
  flex: none;
  width: 478px;
}
.select {
  appearance: none;
  display: block;
  height: 39px;
  padding: 0 48px 0 16px;
  border: 1px solid #c2c2c2;
  border-bottom-color: #a8a8a8;
  border-radius: 8px;
  background: #fff url("data:image/svg+xml,%3Csvg xmlns='http://www.w3.org/2000/svg' width='32' height='36'%3E%3Cpath d='M9 13L16 6L23 13M9 23L16 30L23 23' fill='none' stroke='%23404040' stroke-width='3'/%3E%3C/svg%3E") right no-repeat;
  opacity: 1;
}
.select:disabled {
  color: #858585;
  border-color: #d0d0d0;
  background: #f0f0f0 url("data:image/svg+xml,%3Csvg xmlns='http://www.w3.org/2000/svg' width='32' height='36'%3E%3Cpath d='M9 13L16 6L23 13M9 23L16 30L23 23' fill='none' stroke='%23888' stroke-width='3'/%3E%3C/svg%3E") right no-repeat;
}
.select.accent {
  background: url("data:image/svg+xml,%3Csvg xmlns='http://www.w3.org/2000/svg' width='33' height='38'%3E%3Cpath d='M9 15L16 8L23 15M9 23L16 30L23 23' fill='none' stroke='%23fff' stroke-width='3.4' stroke-linecap='round' stroke-linejoin='round'/%3E%3C/svg%3E") right no-repeat, linear-gradient(#6bb3fa, #147bff) right / 33px 100% no-repeat, #fff;
}

.workspace {
  display: flex;
  padding: 3px 0 2px;
  background: #c6c6c6;
}
.tools {
  display: flex;
  flex-direction: column;
  align-items: center;
  gap: 4px;
  width: 78px;
  margin: -3px 0 -2px;
  padding-top: 13px;
  border-left: 2px solid #fcfcfc;
  border-right: 2px solid #aaa;
  background: linear-gradient(#f0f0f0, #cbcbcb);
}
.tools.left {
  width: 76px;
  margin-right: 2px;
}
.tool {
  width: 64px;
  height: 64px;
  padding: 4px;
  border: 2px solid transparent;
  background: none;
}
.tool.on {
  border-color: #b2d8fd;
  background: #eaf5ff;
}
.hsep {
  width: 48px;
  height: 2px;
  margin: 6px 0;
  background: #b8b8b8;
}
.canvas-pane {
  flex: 1;
  min-width: 0;
  border: 2px solid #5c5c5c;
  border-right-color: #8a8a8a;
  border-bottom-color: #8a8a8a;
  background: #ededed;
}
.canvas-row {
  display: flex;
  padding: 2px 0 0 2px;
}
.canvas {
  display: block;
  flex: 1;
  min-width: 0;
}
.sheet {
  fill: none;
  stroke: #8a0e08;
  stroke-width: 2;
}
.sheet-text {
  fill: #8a0e08;
  font-family: "DejaVu Sans Mono", monospace;
}
.board-text {
  font-family: "DejaVu Sans Mono", monospace;
  font-size: 48px;
  text-anchor: middle;
}
.vscroll {
  display: flex;
  flex-direction: column;
  justify-content: flex-end;
  align-items: center;
  width: 32px;
  padding-bottom: 4px;
  border-left: 2px solid #ededed;
  border-right: 4px solid #ededed;
  background: #fafafa;
}
.vscroll span {
  width: 16px;
  height: 55%;
  border-radius: 8px;
  background: #c1c1c1;
}
.hscroll {
  display: flex;
  align-items: center;
  height: 32px;
  padding-left: 364px;
  border-top: 2px solid #ededed;
  border-bottom: 4px solid #ededed;
  background: #fafafa;
}
.hscroll span {
  width: 48%;
  height: 16px;
  border-radius: 8px;
  background: #c1c1c1;
}
.sash {
  display: flex;
  justify-content: center;
  align-items: center;
  width: 14px;
  margin: -1px 0 -2px;
  background: #ebebeb;
}
.sash i {
  width: 12px;
  height: 12px;
  border: 1px solid #c0c0c0;
  border-radius: 50%;
  background: #d8d8d8;
}
.visibles {
  display: flex;
  flex-direction: column;
  width: 260px;
  padding: 0 11px 10px 11px;
  border: 2px solid #b0b0b0;
  background: #ebebeb;
}
.visibles h2 {
  margin: 0 -11px 9px;
  padding-left: 7px;
  font-size: 22px;
  line-height: 31px;
  color: #000;
  background: linear-gradient(#cdcdcd, #d6d6d6);
}
.notebook {
  flex: 1;
  width: 236px;
  border: 2px solid #b4b4b4;
}
.tabs {
  display: flex;
  align-items: flex-end;
  height: 43px;
  padding: 0 10px 6px;
  border-bottom: 2px solid #b4b4b4;
  background: linear-gradient(#d2d2d2, #f0f0f0 82%, #b4b4b4 82%, #b4b4b4 87%, #e2e2e2 87%);
}
.tab {
  height: 28px;
  width: 86px;
  border: 2px solid #b0b0b0;
  border-bottom: 0;
  border-radius: 6px 6px 0 0;
  font-size: 16px;
  line-height: 26px;
  color: #222;
  background: linear-gradient(#ececec, #dedede);
}
.tab.active {
  width: 74px;
  background: #fff;
}
.layer-rows {
  list-style: none;
  padding-top: 2px;
}
.layer-rows li {
  display: flex;
  height: 36px;
  padding-left: 6px;
  font-size: 16px;
  color: #000;
}
.marker {
  width: 15px;
  height: 28px;
  margin: 6px 4px 0 0;
}
.marker.shown {
  background: linear-gradient(#98a0ff 50%, #1033f5 50%);
  clip-path: polygon(0 0, 100% 50%, 0 100%);
}
.swatch {
  display: flex;
  justify-content: center;
  align-items: center;
  width: 37px;
  height: 39px;
  padding-top: 2px;
  border: 1px solid #c8c8c8;
  border-radius: 7px;
  background: #fff;
}
.swatch i {
  width: 16px;
  height: 20px;
  border-top: 2px solid rgba(0, 0, 0, .35);
  border-bottom: 2px solid rgba(0, 0, 0, .35);
}
.layer-rows label {
  display: flex;
  align-items: center;
  gap: 19px;
  height: 28px;
  margin: 6px 0 0 8px;
}

.message-bar {
  height: 56px;
  padding: 25px 24px 0;
  border: 2px solid #b4b4b4;
  border-right: 0;
  font-size: 22px;
  line-height: 29px;
  white-space: nowrap;
  overflow: hidden;
  color: #159494;
}
.status-bar {
  display: flex;
  height: 37px;
  border-top: 2px solid #fafafa;
  font-size: 24px;
  line-height: 28px;
  white-space: nowrap;
  color: #000;
}
.s-zoom {
  margin-left: 1423px;
  width: 127px;
}
.s-pos {
  width: 372px;
}
.s-delta {
  width: 584px;
}

.dialog {
  position: absolute;
  top: 122px;
  left: 812px;
  width: 1288px;
  border-radius: 10px;
  background: #ebebeb;
  box-shadow: 0 0 0 1px rgba(0, 0, 0, .3), 0 40px 80px rgba(0, 0, 0, .6);
}
.body {
  padding: 14px 12px 9px;
}
.top-row {
  display: flex;
  height: 73px;
}
.field label {
  display: block;
  padding-left: 4px;
  line-height: 30px;
  white-space: nowrap;
  color: #000;
}
.format {
  width: 217px;
  margin-left: -2px;
}
.format .select {
  width: 217px;
}
.outdir {
  flex: 1;
  margin: 0 22px 0 22px;
}
.outdir label {
  padding-left: 2px;
}
.text {
  display: block;
  width: 100%;
  height: 42px;
  margin-top: 1px;
  padding: 4px 6px 0;
  border: 2px solid #b8b8b8;
  background: #fff;
}
.btn {
  height: 40px;
  min-width: 165px;
  border: 1px solid #c6c6c6;
  border-bottom-color: #a6a6a6;
  border-radius: 8px;
  background: #fff;
  text-align: center;
  color: #1e1e1e;
}
.browse {
  align-self: flex-end;
}
.columns {
  display: flex;
  gap: 25px;
  margin-top: 7px;
}
.group h2 {
  padding-left: 20px;
  font-size: 22px;
  line-height: 28px;
}
.panel {
  border: 1px solid #d6d6d6;
  border-radius: 8px;
  background: #e1e1e1;
}
.layers {
  display: flex;
  flex-direction: column;
  width: 297px;
}
.layers .panel {
  display: flex;
  flex: 1;
  padding: 22px 3px 8px 28px;
}
.listbox {
  flex: 1;
  padding: 1px 7px;
  border: 2px solid #b4b4b4;
  background: #fff;
  font-size: 25px;
}
.listbox label {
  display: flex;
  align-items: center;
  gap: 38px;
  height: 40px;
}
.right-col {
  flex: 1;
}
.check {
  appearance: none;
  flex: none;
  width: 28px;
  height: 28px;
  border: 1px solid #bdbdbd;
  border-radius: 6px;
  background: #fff;
}
.check:checked {
  border-color: #3b99fc;
  background: #3f9bfb url("data:image/svg+xml,%3Csvg xmlns='http://www.w3.org/2000/svg' viewBox='0 0 28 28'%3E%3Cpath d='M7 15L12 20.4L20.6 7.6' fill='none' stroke='%23fff' stroke-width='3' stroke-linecap='round' stroke-linejoin='round'/%3E%3C/svg%3E") center / 28px;
}
.check:disabled {
  border-color: #c8c8c8;
  background: #efefef;
}
.check:checked:disabled {
  background: #efefef url("data:image/svg+xml,%3Csvg xmlns='http://www.w3.org/2000/svg' viewBox='0 0 28 28'%3E%3Cpath d='M7 15L12 20.4L20.6 7.6' fill='none' stroke='%23858585' stroke-width='3' stroke-linecap='round' stroke-linejoin='round'/%3E%3C/svg%3E") center / 28px;
}
.disabled {
  color: #a6a6a6;
}
.options {
  display: flex;
  justify-content: space-between;
  height: 542px;
  padding: 25px 9px 0 34px;
}
.checks {
  padding-top: 4px;
}
.row {
  display: flex;
  gap: 8px;
  height: 40px;
  line-height: 30px;
  white-space: nowrap;
}
.row.tall {
  height: 44px;
}
.fields {
  width: 308px;
}
.fields .field {
  height: 84px;
}
.fields .select {
  width: 100%;
  margin-top: 1px;
}
.solder {
  margin: 14px -6px 14px -7px;
}
.solder .panel {
  display: grid;
  grid-template-columns: 311px 1fr;
  height: 128px;
  padding: 28px 0 0 42px;
  align-content: start;
  line-height: 44px;
  color: #000;
}
.gerber > .panel {
  display: flex;
  justify-content: space-between;
  height: 191px;
  padding: 31px 19px 0 34px;
}
.gerber .checks {
  padding-top: 12px;
}
.fmt {
  width: 381px;
}
.fmt .panel {
  display: flex;
  flex-direction: column;
  gap: 10px;
  height: 106px;
  padding: 13px 0 0 78px;
  background: #d9d9d9;
  border-color: #d0d0d0;
}
.fmt label {
  display: flex;
  gap: 6px;
  line-height: 32px;
}
.radio {
  appearance: none;
  width: 32px;
  height: 32px;
  border: 1px solid #b8b8b8;
  border-radius: 50%;
  background: #fff;
}
.radio:checked {
  border: 10px solid #3f9bfb;
}
.messages {
  margin: 25px 4px 0;
}
.messages .panel {
  height: 264px;
  padding: 31px 13px 0 37px;
}
.messages textarea {
  display: block;
  width: 100%;
  height: 164px;
  resize: none;
  background: #fff;
}
.filter-row {
  display: flex;
  align-items: center;
  height: 40px;
  margin-top: 11px;
  padding-left: 4px;
}
.filter-row label {
  display: flex;
  align-items: center;
  gap: 8px;
  margin-left: 28px;
}
.filter-row .btn {
  width: 270px;
  margin-left: auto;
}
.actions {
  display: flex;
  justify-content: flex-end;
  gap: 23px;
  margin-top: 29px;
  padding-right: 9px;
}
.btn.wide {
  width: 245px;
}
.btn.primary {
  color: #fff;
  border-color: #4a9cf8 #2b87f6 #1368dd;
  background: linear-gradient(#6cb3fa, #147cff);
}
</style>
